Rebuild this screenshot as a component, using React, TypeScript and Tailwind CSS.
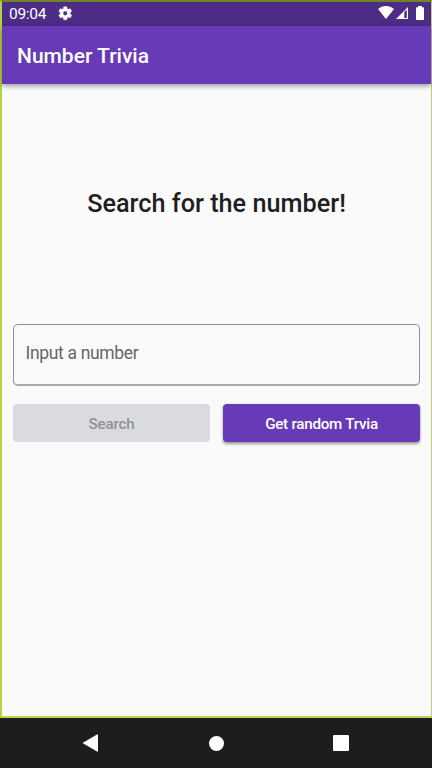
import React from "react";

function StatusBar() {
  return (
    <div className="flex h-6 items-start bg-[#4c2c87] pl-[7px] pr-[7px] text-white">
      <span className="w-[38px] whitespace-nowrap text-[15.5px] leading-6 tracking-[-0.3px]">09:04</span>
      <svg className="ml-[9.5px] mt-[2.5px] h-[16.5px] w-[16.5px]" viewBox="0 0 24 24" fill="currentColor">
        <path d="M19.14 12.94c.04-.3.06-.61.06-.94 0-.32-.02-.64-.07-.94l2.03-1.58a.49.49 0 0 0 .12-.61l-1.92-3.32a.488.488 0 0 0-.59-.22l-2.39.96c-.5-.38-1.03-.7-1.62-.94l-.36-2.54a.484.484 0 0 0-.48-.41h-3.84c-.24 0-.43.17-.47.41l-.36 2.54c-.59.24-1.13.57-1.62.94l-2.39-.96c-.22-.08-.47 0-.59.22L2.74 8.87c-.12.21-.08.47.12.61l2.03 1.58c-.05.3-.09.63-.09.94s.02.64.07.94l-2.03 1.58a.49.49 0 0 0-.12.61l1.92 3.32c.12.22.37.29.59.22l2.39-.96c.5.38 1.03.7 1.62.94l.36 2.54c.05.24.24.41.48.41h3.84c.24 0 .44-.17.47-.41l.36-2.54c.59-.24 1.13-.56 1.62-.94l2.39.96c.22.08.47 0 .59-.22l1.92-3.32c.12-.22.07-.47-.12-.61l-2.01-1.58zM12 15.2A3.2 3.2 0 1 1 12 8.8a3.2 3.2 0 0 1 0 6.4z" stroke="currentColor" strokeWidth=".5" />
      </svg>
      <div className="ml-auto flex pt-1">
        <svg className="h-[13px] w-4" viewBox="0 0 16 13" fill="currentColor">
          <path d="M0 3.1C4.6-1 11.4-1 16 3.1L8 13z" />
        </svg>
        <svg className="ml-[2px] mt-px h-3 w-3" viewBox="0 0 12 12" fill="currentColor">
          <path fillRule="evenodd" d="M12 0V12H0zM8.300 5V11h2.500V2.700z" />
        </svg>
        <svg className="ml-2 h-[14px] w-2" viewBox="0 0 8 14" fill="currentColor">
          <path d="M2 0h4v1.3h1.3q.7 0 .7.7v11.3q0 .7-.7.7H.7Q0 14 0 13.300V2q0-.7.7-.7H2z" />
        </svg>
      </div>
    </div>
  );
}

export default function App() {
  return (
    <div className="flex h-[768px] w-[432px] flex-col overflow-hidden bg-[#1d1d1d] font-['Roboto',sans-serif]">
      <div className="flex h-[718px] flex-col border-b-2 border-l-2 border-r border-t-2 border-b-[#b9d653] border-l-[#b2d53c] border-r-[#b9d278] border-t-[#718323] bg-[#fafafa]">
        <StatusBar />
        <header className="flex h-[58px] shrink-0 items-center bg-[#673ab7] pl-[15px] pt-[2px] shadow-[0_2px_5px_rgba(0,0,0,0.38)]">
          <h1 className="whitespace-nowrap text-[21px] font-medium leading-6 text-white">Number Trivia</h1>
        </header>
        <main className="flex flex-1 flex-col pl-[11px] pr-[11px]">
          <div className="flex h-[240px] items-center justify-center">
            <h2 className="whitespace-nowrap text-[25.25px] font-medium leading-8 text-[#1f1f1f]">Search for the number!</h2>
          </div>
          <div className="flex h-[62px] items-center rounded-[5px] border border-b-2 border-[#929094] border-b-[#aaa8ad] pb-[3px] pl-[11.5px]">
            <span className="text-[17.5px] leading-6 tracking-[-0.33px] text-[#666666]">Input a number</span>
          </div>
          <div className="mt-[18px] flex gap-[13px]">
            <button className="h-[38px] flex-1 rounded-[4px] bg-[#d9dbdf] pt-[2px] text-[15.2px] font-medium tracking-[-0.2px] text-[#929294]">Search</button>
            <button className="h-[38px] flex-1 whitespace-nowrap rounded-[4px] bg-[#673ab7] pt-[2px] text-[15.2px] font-medium tracking-[-0.25px] text-white shadow-[0_1.5px_3px_rgba(0,0,0,0.4)]">Get random Trvia</button>
          </div>
        </main>
      </div>
      <nav className="flex h-[50px] items-center pl-[82px] text-white">
        <svg className="h-[18px] w-4" viewBox="0 0 16 18" fill="currentColor">
          <path d="M.5 9 15 .5Q16 0 16 1v16q0 1-1 .5z" />
        </svg>
        <div className="ml-[111px] h-[15px] w-[15px] rounded-full bg-white" />
        <div className="ml-[109px] h-4 w-4 rounded-[1px] bg-white" />
      </nav>
    </div>
  );
}
